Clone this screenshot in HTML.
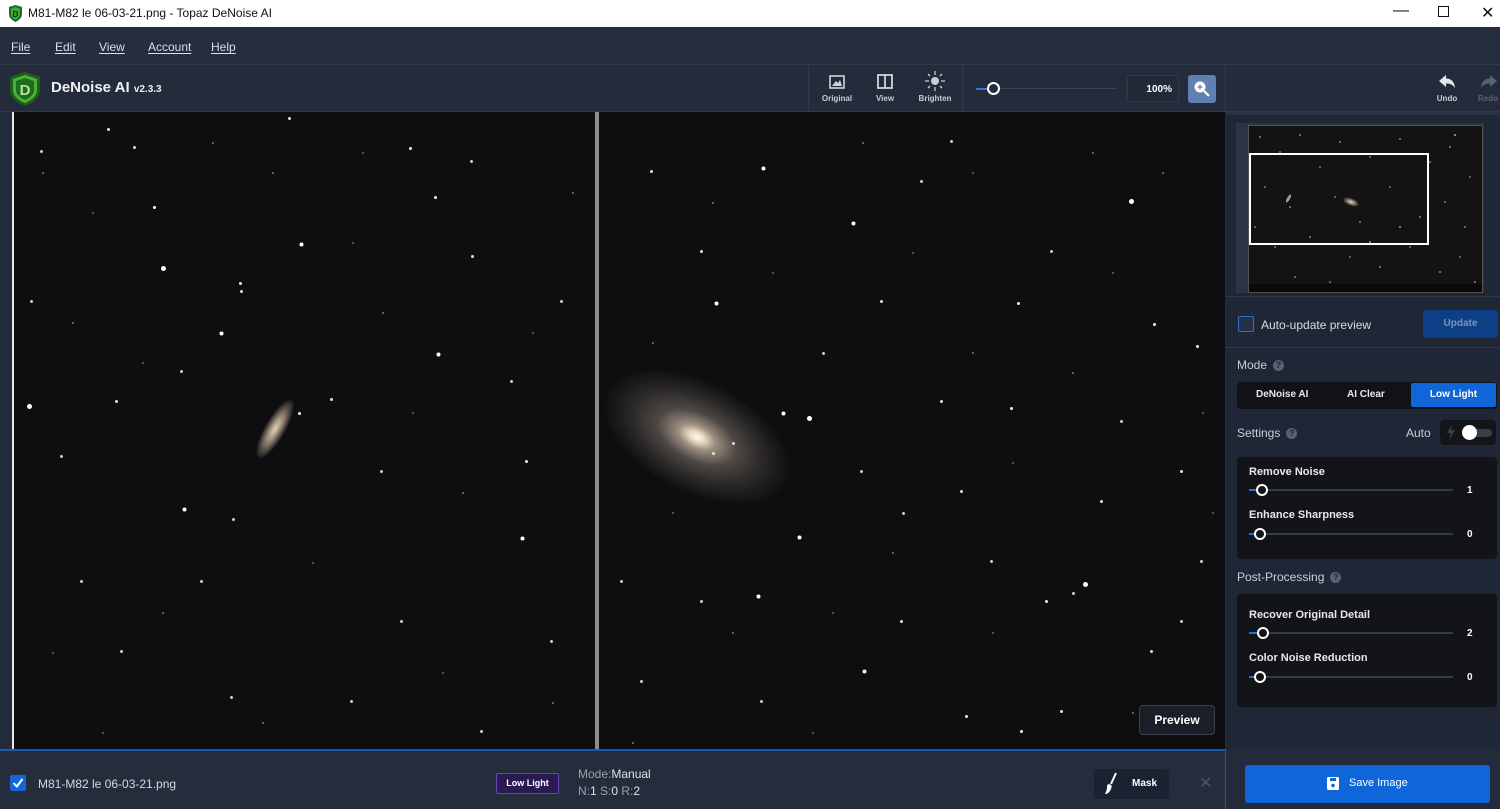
<!DOCTYPE html>
<html><head><meta charset="utf-8">
<style>
*{margin:0;padding:0;box-sizing:border-box}
body{width:1500px;height:809px;overflow:hidden;background:#232b3a;font-family:"Liberation Sans",sans-serif;position:relative;color:#e6e8ec}
.abs{position:absolute}
#title{left:0;top:0;width:1500px;height:27px;background:#fff;color:#111;font-size:12px}
#menu{left:0;top:27px;width:1500px;height:38px;background:#262e3e;border-bottom:1px solid #323b4c;font-size:12px;color:#dde}
#menu span{position:absolute;top:13px;text-decoration:underline;text-underline-offset:2px}
#hdr{left:0;top:65px;width:1500px;height:47px;background:#242c3b;border-bottom:1px solid #313a4a}
.tb{position:absolute;top:94px;font-size:8px;font-weight:bold;color:#c8ccd4;text-align:center;width:50px}
#img{left:12px;top:112px;width:1213px;height:637px;background:#0e0e10;overflow:hidden}
.st{position:absolute;left:0;top:0;border-radius:50%}
#right{left:1226px;top:112px;width:274px;height:697px;background:#1f2737}
.box{position:absolute;background:#131418;border-radius:4px}
.lbl{position:absolute;font-size:11px;font-weight:bold;color:#e8e8ea}
.trk{position:absolute;height:2px;background:#343b4a}
.knob{position:absolute;width:12px;height:12px;border-radius:50%;border:2px solid #fff;background:#131418}
.val{position:absolute;font-size:10px;font-weight:bold;color:#fff}
.sec{position:absolute;font-size:12px;color:#c9cdd5}
.q{display:inline-block;width:11px;height:11px;border-radius:50%;background:#5a6170;color:#1f2737;font-size:9px;font-weight:bold;text-align:center;line-height:11px;margin-left:6px;vertical-align:1px}
</style></head><body>
<div id="title" class="abs">
 <svg class="abs" style="left:8px;top:5px" width="15" height="17" viewBox="0 0 15 17"><path d="M1 2 L7.5 0 L14 2 L14 9 Q14 14 7.5 17 Q1 14 1 9Z" fill="#1e6b1e"/><path d="M3 3.5 L7.5 2 L12 3.5 L12 9 Q12 12.5 7.5 15 Q3 12.5 3 9Z" fill="#3fa63f"/><text x="7.5" y="12" font-size="8" font-weight="bold" text-anchor="middle" fill="#0c2a0c" font-family="Liberation Sans">D</text></svg>
 <span class="abs" style="left:28px;top:6px">M81-M82 le 06-03-21.png - Topaz DeNoise AI</span>
 <span class="abs" style="left:1393px;top:2px;font-size:16px">&#8212;</span>
 <span class="abs" style="left:1438px;top:6px;width:11px;height:11px;border:1px solid #111"></span>
 <span class="abs" style="left:1481px;top:3px;font-size:16px">&#10005;</span>
</div>
<div id="menu" class="abs">
 <span style="left:11px">File</span><span style="left:55px">Edit</span><span style="left:99px">View</span><span style="left:148px">Account</span><span style="left:211px">Help</span>
</div>
<div id="hdr" class="abs">
 <svg class="abs" style="left:8px;top:7px" width="34" height="34" viewBox="0 0 34 34"><path d="M2 5 L17 0 L32 5 L32 18 Q32 28 17 34 Q2 28 2 18Z" fill="#1d5e1d"/><path d="M5 7 L17 3 L29 7 L29 18 Q29 26 17 31 Q5 26 5 18Z" fill="#4caf3a"/><path d="M8 9 L17 6 L26 9 L26 18 Q26 24 17 28 Q8 24 8 18Z" fill="#1f6b1c"/><text x="17" y="23" font-size="15" font-weight="bold" text-anchor="middle" fill="#b7e39a" font-family="Liberation Sans">D</text></svg>
 <span class="abs" style="left:51px;top:14px;font-size:15px;font-weight:bold;color:#f0f0f2">DeNoise AI <span style="font-size:10px">v2.3.3</span></span>
 <div class="abs" style="left:808px;top:0;width:1px;height:46px;background:#313a4a"></div>
 <div class="abs" style="left:962px;top:0;width:1px;height:46px;background:#313a4a"></div>
 <div class="abs" style="left:1225px;top:0;width:1px;height:46px;background:#313a4a"></div>
 <svg class="abs" style="left:829px;top:10px" width="16" height="14"><rect x="1" y="1" width="14" height="12" fill="none" stroke="#d0d4da" stroke-width="1.6"/><path d="M3 11 L7 6 L9 8 L11 5 L13 11Z" fill="#d0d4da"/></svg>
 <svg class="abs" style="left:877px;top:9px" width="16" height="15"><rect x="1" y="1" width="14" height="13" fill="none" stroke="#d0d4da" stroke-width="1.8"/><line x1="8" y1="1" x2="8" y2="14" stroke="#d0d4da" stroke-width="1.8"/></svg>
 <svg class="abs" style="left:925px;top:6px" width="20" height="20"><circle cx="10" cy="10" r="4" fill="#c8ccd4"/><g stroke="#c8ccd4" stroke-width="1.3"><line x1="10" y1="0" x2="10" y2="4"/><line x1="10" y1="16" x2="10" y2="20"/><line x1="0" y1="10" x2="4" y2="10"/><line x1="16" y1="10" x2="20" y2="10"/><line x1="3" y1="3" x2="5" y2="5"/><line x1="15" y1="15" x2="17" y2="17"/><line x1="17" y1="3" x2="15" y2="5"/><line x1="3" y1="17" x2="5" y2="15"/></g></svg>
 <div class="abs" style="left:976px;top:23px;width:140px;height:1px;background:#3a4354"></div>
 <div class="abs" style="left:976px;top:23px;width:12px;height:2px;background:#2e7bdf"></div>
 <div class="abs" style="left:987px;top:17px;width:13px;height:13px;border-radius:50%;border:2px solid #fff;background:#242c3b"></div>
 <div class="abs" style="left:1127px;top:10px;width:52px;height:27px;border:1px solid #323a4a;border-radius:3px;background:#222a38;font-size:10px;font-weight:bold;color:#fff;text-align:right;padding:8px 6px 0 0">100%</div>
 <div class="abs" style="left:1188px;top:10px;width:28px;height:28px;border-radius:3px;background:#6180b2"></div>
 <svg class="abs" style="left:1192px;top:14px" width="20" height="20"><circle cx="8" cy="8" r="5.5" fill="#fff"/><line x1="12" y1="12" x2="17" y2="17" stroke="#fff" stroke-width="2.2"/><line x1="8" y1="5.5" x2="8" y2="10.5" stroke="#6180b2" stroke-width="1.3"/><line x1="5.5" y1="8" x2="10.5" y2="8" stroke="#6180b2" stroke-width="1.3"/></svg>
 <svg class="abs" style="left:1438px;top:9px" width="18" height="15"><path d="M1 7 L8 1 L8 4.5 Q16 4.5 17 14 Q14 9 8 9.5 L8 13Z" fill="#e4e6ea"/></svg>
 <svg class="abs" style="left:1480px;top:9px" width="18" height="15"><path d="M17 7 L10 1 L10 4.5 Q2 4.5 1 14 Q4 9 10 9.5 L10 13Z" fill="#5b6272"/></svg>
</div>
<div class="tb" style="left:812px">Original</div>
<div class="tb" style="left:860px">View</div>
<div class="tb" style="left:910px">Brighten</div>
<div class="tb" style="left:1422px">Undo</div>
<div class="tb" style="left:1463px;color:#5b6272">Redo</div>

<div id="img" class="abs">
 <div class="abs" style="left:0;top:0;width:2px;height:637px;background:#e8e8e8"></div>
 <div class="abs" style="left:583px;top:0;width:4px;height:637px;background:#8d8d90"></div>
 <!-- M82 -->
 <div class="abs" style="left:230px;top:307px;width:66px;height:20px;border-radius:50%;transform:rotate(-60deg);background:radial-gradient(ellipse,#e0cfb8 0%,#9a8a78 30%,#4a4440 55%,rgba(30,28,28,0) 75%)"></div>
 <!-- M81 -->
 <div class="abs" style="left:585px;top:270px;width:200px;height:110px;border-radius:50%;transform:rotate(27deg);background:radial-gradient(ellipse,#fffaf0 0%,#e8d8c0 6%,#9c8e80 14%,#4e4844 30%,#2a2828 50%,rgba(16,16,18,0) 72%)"></div>
 <div class="st" style="width:3px;height:3px;background:transparent;box-shadow:150px 155px 0 1px #fff,288px 131px 0 .5px #fff,141px 94px 0 0 #fff,208px 220px 0 .5px #fff,425px 241px 0 .5px #fff,16px 293px 0 1px #fff,171px 396px 0 .5px #fff,227px 170px 0 0 #eee,513px 348px 0 0 #eee,509px 425px 0 .5px #fff,286px 300px 0 0 #eee,397px 35px 0 0 #eee,422px 84px 0 0 #eee,95px 16px 0 0 #ddd,276px 5px 0 0 #ddd,121px 34px 0 0 #ddd,228px 178px 0 0 #ddd,103px 288px 0 0 #ddd,318px 286px 0 0 #ddd,459px 143px 0 0 #ddd,48px 343px 0 0 #ccc,220px 406px 0 0 #ccc,188px 468px 0 0 #ccc,388px 508px 0 0 #ccc,108px 538px 0 0 #ccc,338px 588px 0 0 #ccc,218px 584px 0 0 #ccc,468px 618px 0 0 #ccc,538px 528px 0 0 #ccc,68px 468px 0 0 #ccc,368px 358px 0 0 #ccc,498px 268px 0 0 #ccc,458px 48px 0 0 #ccc,28px 38px 0 0 #ccc,168px 258px 0 0 #ccc,548px 188px 0 0 #ccc,18px 188px 0 0 #ccc,1118px 88px 0 1px #fff,1072px 471px 0 1px #fff,786px 424px 0 .5px #fff,796px 305px 0 1px #fff,770px 300px 0 .5px #fff,745px 483px 0 .5px #fff,840px 110px 0 .5px #fff,703px 190px 0 .5px #fff,750px 55px 0 .5px #fff,1005px 190px 0 0 #eee,1184px 233px 0 0 #eee,1141px 211px 0 0 #eee,998px 295px 0 0 #eee,1008px 618px 0 0 #eee,851px 558px 0 .5px #eee,953px 603px 0 0 #eee,1033px 488px 0 0 #eee,888px 508px 0 0 #ddd,1088px 388px 0 0 #ddd,948px 378px 0 0 #ddd,1168px 358px 0 0 #ddd,638px 58px 0 0 #ddd,688px 138px 0 0 #ddd,1048px 598px 0 0 #ddd,928px 288px 0 0 #ddd,868px 188px 0 0 #ddd,1138px 538px 0 0 #ddd,608px 468px 0 0 #ccc,628px 568px 0 0 #ccc,1188px 448px 0 0 #ccc,908px 68px 0 0 #ccc,1038px 138px 0 0 #ccc,688px 488px 0 0 #ccc,748px 588px 0 0 #ccc,1108px 308px 0 0 #ccc,848px 358px 0 0 #ccc,978px 448px 0 0 #ccc,1168px 508px 0 0 #ccc,938px 28px 0 0 #ccc,720px 330px 0 0 #ddd,700px 340px 0 0 #ddd,810px 240px 0 0 #ccc,890px 400px 0 0 #ccc,1060px 480px 0 0 #ccc"></div>
 <div class="st" style="width:2px;height:2px;background:transparent;box-shadow:30px 60px #777,80px 100px #666,60px 210px #777,130px 250px #666,260px 60px #777,340px 130px #666,370px 200px #777,400px 300px #666,450px 380px #777,300px 450px #666,150px 500px #777,90px 620px #666,250px 610px #777,430px 560px #666,560px 80px #777,520px 220px #666,540px 590px #777,350px 40px #666,200px 30px #777,40px 540px #666,640px 230px #777,660px 400px #666,720px 520px #777,800px 620px #666,850px 30px #777,900px 140px #666,960px 240px #777,1000px 350px #666,1060px 260px #777,1100px 160px #666,1150px 60px #777,1190px 300px #666,1120px 600px #777,980px 520px #666,880px 440px #777,820px 500px #666,700px 90px #777,760px 160px #666,620px 630px #777,1200px 400px #666,1080px 40px #777,960px 60px #666"></div>
 <div class="abs" style="left:1127px;top:593px;width:76px;height:30px;border:1px solid #3a4252;border-radius:4px;background:#1a1e27;font-size:12px;font-weight:bold;color:#fff;text-align:center;line-height:28px">Preview</div>
</div>

<div id="right" class="abs">
 <div class="abs" style="left:0;top:0;width:274px;height:3px;background:#2a3344"></div>
 <div class="abs" style="left:10px;top:11px;width:248px;height:170px;background:#2a3446"></div>
 <div class="abs" style="left:22px;top:13px;width:235px;height:168px;background:#131313;border:1px solid #55524e;overflow:hidden">
  <div class="st" style="width:2px;height:2px;background:transparent;box-shadow:10px 10px #888,30px 25px #777,50px 8px #888,70px 40px #777,90px 15px #888,120px 30px #777,150px 12px #888,180px 35px #777,200px 20px #888,220px 50px #777,15px 60px #777,40px 80px #888,85px 70px #777,110px 95px #888,140px 60px #777,170px 90px #888,195px 75px #777,215px 100px #888,25px 120px #777,60px 110px #888,100px 130px #777,130px 140px #888,160px 120px #777,190px 145px #888,210px 130px #777,45px 150px #888,80px 155px #777,225px 155px #888,120px 115px #999,150px 100px #999,5px 100px #777,205px 8px #aaa"></div>
  <div class="abs" style="left:0;top:158px;width:235px;height:9px;background:#0a0a0a"></div>
 </div>
 <div class="abs" style="left:116px;top:86px;width:18px;height:8px;border-radius:50%;transform:rotate(20deg);background:radial-gradient(ellipse,#e8d8c0,rgba(80,70,60,0) 70%)"></div>
 <div class="abs" style="left:58px;top:85px;width:9px;height:3px;border-radius:50%;transform:rotate(-60deg);background:#a89a88"></div>
 <div class="abs" style="left:23px;top:41px;width:180px;height:92px;border:2px solid #fff"></div>
 <div class="abs" style="left:0;top:184px;width:274px;height:1px;background:#2f3848"></div>
 <div class="abs" style="left:12px;top:204px;width:16px;height:16px;border:1px solid #2e6fd0;border-radius:2px;background:#243048"></div>
 <div class="sec" style="left:35px;top:206px;color:#d8dbe0">Auto-update preview</div>
 <div class="abs" style="left:197px;top:198px;width:75px;height:28px;border-radius:3px;background:#0d3f86;font-size:10px;font-weight:bold;color:#7d93b8;text-align:center;line-height:28px">Update</div>
 <div class="abs" style="left:0;top:235px;width:274px;height:1px;background:#2f3848"></div>
 <div class="sec" style="left:11px;top:246px">Mode<span class="q">?</span></div>
 <div class="box" style="left:11px;top:270px;width:260px;height:27px;background:#111216"></div>
 <div class="lbl" style="left:30px;top:277px;font-size:10px">DeNoise AI</div>
 <div class="lbl" style="left:121px;top:277px;font-size:10px">AI Clear</div>
 <div class="abs" style="left:185px;top:271px;width:85px;height:24px;border-radius:2px;background:#0f66d9;font-size:10px;font-weight:bold;color:#fff;text-align:center;line-height:24px">Low Light</div>
 <div class="sec" style="left:11px;top:314px">Settings<span class="q">?</span></div>
 <div class="sec" style="left:180px;top:314px">Auto</div>
 <div class="box" style="left:214px;top:308px;width:56px;height:25px;background:#131519"></div>
 <svg class="abs" style="left:220px;top:312px" width="10" height="17"><path d="M6 0 L1 9 L5 9 L3 17 L9 6 L5 6Z" fill="#3b3f47"/></svg>
 <div class="abs" style="left:236px;top:317px;width:30px;height:8px;border-radius:4px;background:#3a3e47"></div>
 <div class="abs" style="left:236px;top:313px;width:15px;height:15px;border-radius:50%;background:#fff"></div>

 <div class="box" style="left:11px;top:345px;width:260px;height:102px"></div>
 <div class="lbl" style="left:23px;top:354px">Remove Noise</div>
 <div class="trk" style="left:23px;top:377px;width:204px"></div><div class="abs" style="left:23px;top:377px;width:10px;height:2px;background:#1f6fe0"></div>
 <div class="knob" style="left:30px;top:372px"></div><div class="val" style="left:241px;top:373px">1</div>
 <div class="lbl" style="left:23px;top:397px">Enhance Sharpness</div>
 <div class="trk" style="left:23px;top:421px;width:204px"></div><div class="abs" style="left:23px;top:421px;width:8px;height:2px;background:#1f6fe0"></div>
 <div class="knob" style="left:28px;top:416px"></div><div class="val" style="left:241px;top:417px">0</div>
 <div class="sec" style="left:11px;top:458px">Post-Processing<span class="q">?</span></div>
 <div class="box" style="left:11px;top:482px;width:260px;height:113px"></div>
 <div class="lbl" style="left:23px;top:497px">Recover Original Detail</div>
 <div class="trk" style="left:23px;top:520px;width:204px"></div><div class="abs" style="left:23px;top:520px;width:12px;height:2px;background:#1f6fe0"></div>
 <div class="knob" style="left:31px;top:515px"></div><div class="val" style="left:241px;top:516px">2</div>
 <div class="lbl" style="left:23px;top:540px">Color Noise Reduction</div>
 <div class="trk" style="left:23px;top:564px;width:204px"></div><div class="abs" style="left:23px;top:564px;width:8px;height:2px;background:#1f6fe0"></div>
 <div class="knob" style="left:28px;top:559px"></div><div class="val" style="left:241px;top:560px">0</div>
 <div class="abs" style="left:0;top:637px;width:274px;height:60px;background:#232b3a"></div>
 <div class="abs" style="left:19px;top:653px;width:245px;height:38px;border-radius:3px;background:#0f66d9"></div>
 <svg class="abs" style="left:101px;top:665px" width="12" height="13"><rect x="0" y="0" width="12" height="13" rx="1.5" fill="#fff"/><rect x="3" y="1" width="6" height="3" fill="#0f66d9"/><circle cx="6" cy="8.5" r="1.8" fill="#0f66d9"/></svg>
 <div class="abs" style="left:123px;top:665px;font-size:11px;color:#fff">Save Image</div>
</div>

<div class="abs" style="left:0;top:749px;width:1226px;height:60px;background:#252d3d;border-top:2px solid #1659b8;border-right:1px solid #1659b8"></div>
<div class="abs" style="left:10px;top:775px;width:16px;height:16px;border-radius:2px;background:#1565d8"></div>
<svg class="abs" style="left:12px;top:777px" width="12" height="12"><path d="M1.5 6 L4.8 9.5 L10.5 2" stroke="#fff" stroke-width="2" fill="none"/></svg>
<div class="abs" style="left:38px;top:777px;font-size:12px;color:#d5d8de">M81-M82 le 06-03-21.png</div>
<div class="abs" style="left:496px;top:773px;width:63px;height:21px;border:1px solid #6a43b8;border-radius:2px;background:#2a1a50;font-size:9px;font-weight:bold;color:#fff;text-align:center;line-height:19px">Low Light</div>
<div class="abs" style="left:578px;top:767px;font-size:12px;color:#9aa0aa">Mode:<span style="color:#e0e2e6">Manual</span></div>
<div class="abs" style="left:578px;top:784px;font-size:12px;color:#9aa0aa">N:<span style="color:#e0e2e6">1</span> S:<span style="color:#e0e2e6">0</span> R:<span style="color:#e0e2e6">2</span></div>
<div class="abs" style="left:1094px;top:769px;width:75px;height:30px;border-radius:3px;background:#1a2130"></div>
<svg class="abs" style="left:1104px;top:772px" width="14" height="24"><path d="M12 1 L7 12" stroke="#fff" stroke-width="2"/><path d="M5 12 Q9 13 7 17 Q5 22 1 22 Q3 18 3 15 Q3 12 5 12Z" fill="#fff"/></svg>
<div class="abs" style="left:1132px;top:778px;font-size:10px;font-weight:bold;color:#fff">Mask</div>
<div class="abs" style="left:1199px;top:773px;font-size:16px;color:#4c5464">&#10005;</div>
</body></html>
